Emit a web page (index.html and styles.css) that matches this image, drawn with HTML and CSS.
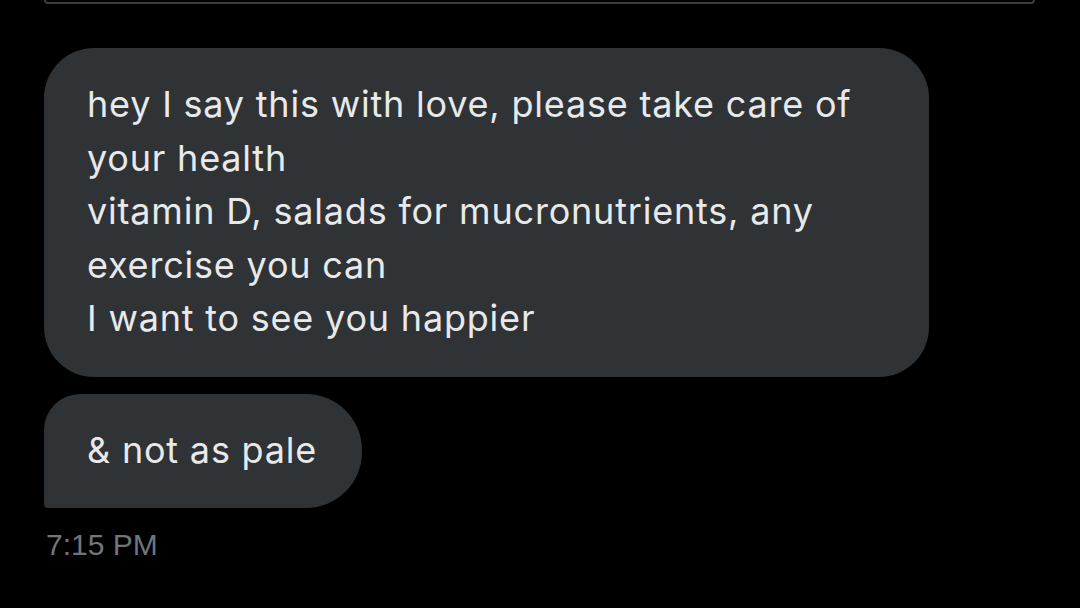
FILE: index.html
```html
<!DOCTYPE html>
<html>
<head>
<meta charset="utf-8">
<link rel="stylesheet" href="styles.css">
</head>
<body>
<div class="page">
  <div class="top-box"></div>
  <div class="thread">
    <div class="bubble bubble-first">hey I say this with love, please take care of<br>your health<br>vitamin D, salads for mucronutrients, any<br>exercise you can<br>I want to see you happier</div>
    <div class="bubble bubble-last">&amp; not as pale</div>
    <div class="time">7:15 PM</div>
  </div>
</div>
</body>
</html>
```

FILE: styles.css
```css
html, body {
  margin: 0;
  padding: 0;
  background: #000;
}
.page {
  width: 1080px;
  height: 608px;
  overflow: hidden;
  padding: 0 44px;
  box-sizing: border-box;
}
.top-box {
  width: 987px;
  height: 2px;
  border: 2px solid #3a3d40;
  border-top: none;
  border-radius: 0 0 8px 8px;
}
.thread {
  display: flex;
  flex-direction: column;
  align-items: flex-start;
  gap: 17px;
  padding-top: 44px;
}
.bubble {
  background: #2f3336;
  color: #e7e9ea;
  font-family: Inter, Roboto, sans-serif;
  font-size: 36px;
  letter-spacing: 0.8px;
  line-height: 53.5px;
  padding: 30px 43px;
  box-sizing: border-box;
}
.bubble-first {
  width: 885px;
  padding-bottom: 31.5px;
  border-radius: 50px;
}
.bubble-last {
  width: 318px;
  height: 114px;
  border-radius: 36px 56px 56px 4px;
}
.time {
  color: #71767b;
  font-family: "Liberation Sans", Arial, sans-serif;
  font-size: 30px;
  line-height: 36px;
  margin-top: 2px;
  padding-left: 2px;
}
```
